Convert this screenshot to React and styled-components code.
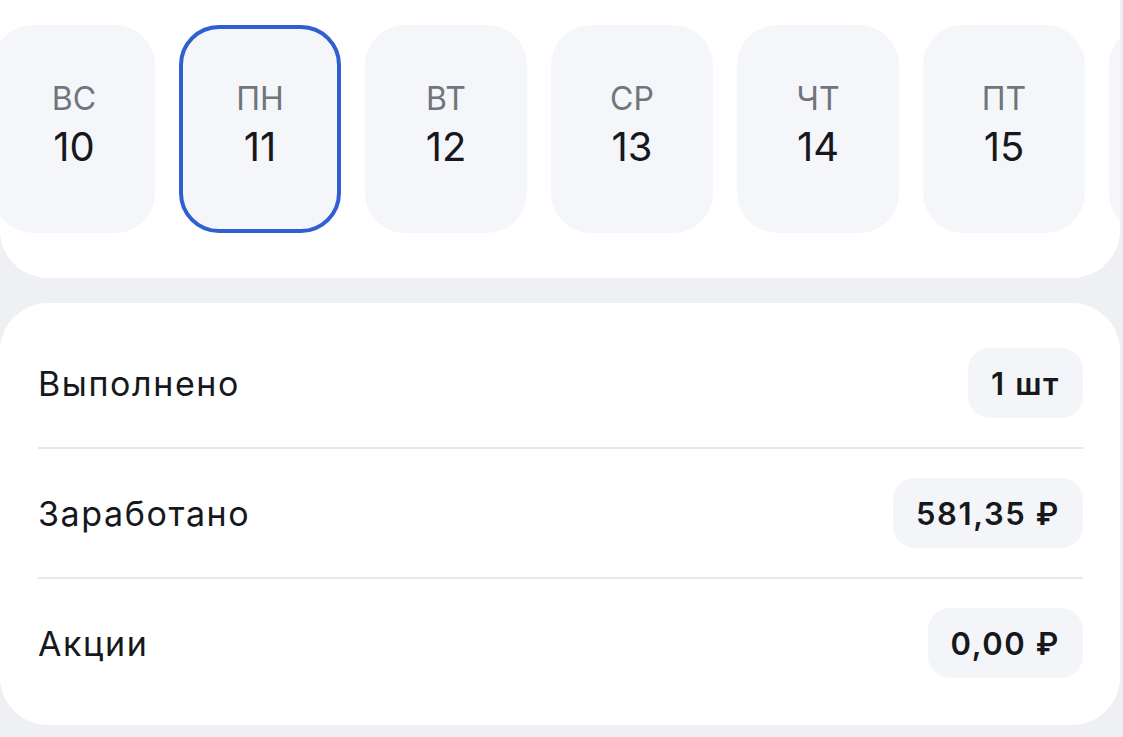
import styled, { createGlobalStyle } from "styled-components";

const GlobalStyle = createGlobalStyle`
  html, body {
    margin: 0;
    padding: 0;
    background: #eef0f4;
    font-family: Inter, "Noto Sans", "Liberation Sans", sans-serif;
    -webkit-font-smoothing: antialiased;
  }
`;

const Page = styled.div`
  width: 1120px;
  height: 737px;
  display: flex;
  flex-direction: column;
  gap: 25px;
  overflow: hidden;
`;

const DaysCard = styled.div`
  background: #ffffff;
  border-radius: 0 0 48px 48px;
  padding: 25px 0 45px;
  overflow: hidden;
`;

const DayStrip = styled.div`
  display: flex;
  gap: 24px;
  margin-left: -7px;
`;

const DayTile = styled.div`
  flex: 0 0 162px;
  height: 208px;
  box-sizing: border-box;
  border-radius: 40px;
  background: #f5f6f9;
  border: 4px solid ${(p) => (p.selected ? "#2f5fd0" : "transparent")};
  display: flex;
  flex-direction: column;
  align-items: center;
  padding-top: 48px;
`;

const DayName = styled.div`
  font-size: 32px;
  line-height: 44px;
  color: #70747b;
  font-weight: 400;
`;

const DayNumber = styled.div`
  font-size: 40px;
  line-height: 52px;
  color: #16181c;
  font-weight: 400;
`;

const StatsCard = styled.div`
  background: #ffffff;
  border-radius: 48px;
  padding: 16px 37px 18px 38px;
`;

const StatRow = styled.div`
  height: 128px;
  display: flex;
  align-items: center;
  justify-content: space-between;
  border-bottom: 2px solid #e7e8ec;
  &:last-child {
    border-bottom: none;
  }
`;

const StatLabel = styled.div`
  font-size: 34px;
  letter-spacing: 1.6px;
  color: #16181c;
  font-weight: 400;
`;

const StatValue = styled.div`
  height: 70px;
  padding: 0 23px;
  border-radius: 22px;
  background: #f4f5f8;
  display: flex;
  align-items: center;
  font-size: 31px;
  letter-spacing: 1.6px;
  font-weight: 600;
  color: #16181c;
`;

const days = [
  { name: "ВС", num: 10 },
  { name: "ПН", num: 11, selected: true },
  { name: "ВТ", num: 12 },
  { name: "СР", num: 13 },
  { name: "ЧТ", num: 14 },
  { name: "ПТ", num: 15 },
  { name: "СБ", num: 16 },
];

const stats = [
  { label: "Выполнено", value: "1 шт" },
  { label: "Заработано", value: "581,35 ₽" },
  { label: "Акции", value: "0,00 ₽" },
];

export default function App() {
  return (
    <>
      <GlobalStyle />
      <Page>
        <DaysCard>
          <DayStrip>
            {days.map((d) => (
              <DayTile key={d.num} selected={d.selected}>
                <DayName>{d.name}</DayName>
                <DayNumber>{d.num}</DayNumber>
              </DayTile>
            ))}
          </DayStrip>
        </DaysCard>
        <StatsCard>
          {stats.map((s) => (
            <StatRow key={s.label}>
              <StatLabel>{s.label}</StatLabel>
              <StatValue>{s.value}</StatValue>
            </StatRow>
          ))}
        </StatsCard>
      </Page>
    </>
  );
}
